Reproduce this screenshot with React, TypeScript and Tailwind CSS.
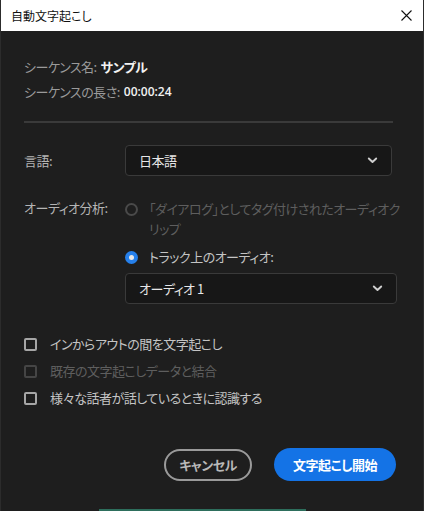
import React from 'react';

const font = "[font-family:'Noto_Sans_CJK_JP','Noto_Sans',sans-serif] [font-feature-settings:'palt']";

function Chevron() {
  return (
    <svg width="11" height="7" viewBox="0 0 11 7" fill="none">
      <path d="M1.8 1.5 L5.5 5 L9.2 1.5" stroke="#cfcfcf" strokeWidth="1.9" strokeLinecap="round" strokeLinejoin="round" />
    </svg>
  );
}

function Select({ value }: { value: string }) {
  return (
    <div className="flex h-[31px] items-center justify-between rounded-[4px] border border-[#3a3a3a] bg-[#171717] pl-[13px] pr-[13px]">
      <span className="text-[13px] text-[#e6e6e6]">{value}</span>
      <Chevron />
    </div>
  );
}

function Checkbox({ label, disabled }: { label: string; disabled?: boolean }) {
  return (
    <div className="flex h-[20px] items-center">
      <span
        className={`h-[13px] w-[13px] rounded-[2px] border-2 ${disabled ? 'border-[#454545]' : 'border-[#a6a6a6]'}`}
      />
      <span className={`ml-[13px] text-[13px] ${disabled ? 'text-[#5e5e5e]' : 'text-[#c4c4c4]'}`}>{label}</span>
    </div>
  );
}

export default function App() {
  return (
    <div className={`flex h-[511px] w-[424px] flex-col border-x border-[#2c2c2c] bg-[#1e1e1e] tracking-[-0.5px] ${font}`}>
      {/* Title bar */}
      <div className="flex h-[31px] shrink-0 items-center justify-between bg-white pl-[10px] pr-[11px] tracking-normal">
        <span className="text-[12px] text-[#111]">自動文字起こし</span>
        <svg width="11" height="11" viewBox="0 0 11 11">
          <path d="M0.5 0.5 L10.5 10.5 M10.5 0.5 L0.5 10.5" stroke="#111" strokeWidth="1.1" />
        </svg>
      </div>

      <div className="flex flex-1 flex-col pl-[23px] pr-[27px]">
        {/* Sequence info */}
        <div className="mt-[26px] flex h-[20px] items-center text-[13px]">
          <span className="text-[#9a9a9a]">シーケンス名:</span>
          <span className="ml-[4px] font-bold text-[#f2f2f2]">サンプル</span>
        </div>
        <div className="mt-[5px] flex h-[20px] items-center text-[13px]">
          <span className="text-[#9a9a9a]">シーケンスの長さ:</span>
          <span className="ml-[4px] [font-family:'Open_Sans',sans-serif] text-[12px] font-semibold tracking-normal text-[#f2f2f2]">00:00:24</span>
        </div>

        <div className="mt-[19px] h-[2px] w-[369px] bg-[#3a3a3a]" />

        {/* Language */}
        <div className="mt-[22px] flex items-center">
          <span className="w-[101px] text-[13px] text-[#b4b4b4]">言語:</span>
          <div className="w-[267px]">
            <Select value="日本語" />
          </div>
        </div>

        {/* Audio analysis */}
        <div className="mt-[20px] flex">
          <span className="mt-[2px] w-[101px] shrink-0 text-[13px] leading-[20px] text-[#b4b4b4]">オーディオ分析:</span>
          <div className="flex flex-1 flex-col">
            <div className="mt-[3px] flex">
              <span className="mt-[4px] h-[13px] w-[13px] shrink-0 rounded-full border-2 border-[#4a4a4a]" />
              <span className="ml-[11px] whitespace-nowrap text-[13px] leading-[20px] text-[#5e5e5e]">
                「ダイアログ」としてタグ付けされたオーディオク
                <br />
                リップ
              </span>
            </div>
            <div className="mt-[8px] flex items-center">
              <span className="flex h-[13px] w-[13px] shrink-0 items-center justify-center rounded-full bg-[#2680eb]">
                <span className="h-[5px] w-[5px] rounded-full bg-[#e8e8e8]" />
              </span>
              <span className="ml-[11px] text-[13px] leading-[20px] text-[#c4c4c4]">トラック上のオーディオ:</span>
            </div>
            <div className="mt-[6px] w-[272px]">
              <Select value="オーディオ 1" />
            </div>
          </div>
        </div>

        {/* Checkboxes */}
        <div className="mt-[30px] flex flex-col gap-[7px]">
          <Checkbox label="インからアウトの間を文字起こし" />
          <Checkbox label="既存の文字起こしデータと結合" disabled />
          <Checkbox label="様々な話者が話しているときに認識する" />
        </div>

        {/* Buttons */}
        <div className="mt-[40px] flex items-center justify-end gap-[22px]">
          <button className="flex h-[32px] w-[88px] items-center justify-center rounded-full border-2 border-[#9a9a9a] text-[13px] font-bold text-[#b8b8b8]">
            キャンセル
          </button>
          <button className="flex h-[33px] w-[122px] items-center justify-center rounded-full bg-[#1473e6] text-[13px] font-bold text-white">
            文字起こし開始
          </button>
        </div>

        <div className="mt-auto ml-[75px] h-[2px] w-[207px] bg-[#2d6e5c]" />
      </div>
    </div>
  );
}
